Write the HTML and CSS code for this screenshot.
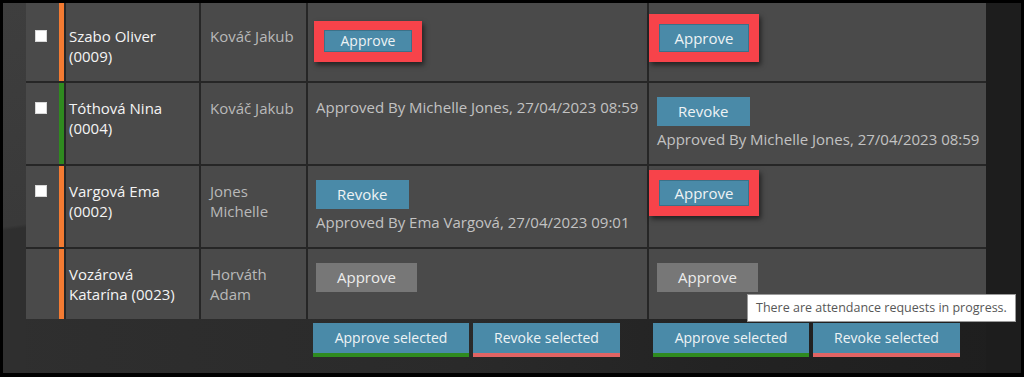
FILE: index.html
```html
<!DOCTYPE html>
<html lang="en">
<head>
  <meta charset="UTF-8">
  <title>Attendance approval</title>
  <link rel="stylesheet" href="styles.css">
</head>
<body>
  <div class="screen">
    <div class="side"></div>

    <div class="main">
      <div class="grid">
        <!-- row cut off by the scroll -->
        <div class="row stub">
          <div class="cell check late"></div>
          <div class="cell"></div>
          <div class="cell"></div>
          <div class="cell"></div>
          <div class="cell"></div>
        </div>

        <div class="row">
          <div class="cell check late"><input type="checkbox"></div>
          <div class="cell name">Szabo Oliver (0009)</div>
          <div class="cell approver">Kováč Jakub</div>
          <div class="cell action">
            <span class="mark mark-a"><span class="btn small">Approve</span></span>
          </div>
          <div class="cell action">
            <span class="mark mark-b"><span class="btn mid">Approve</span></span>
          </div>
        </div>

        <div class="row">
          <div class="cell check ok"><input type="checkbox"></div>
          <div class="cell name">Tóthová Nina (0004)</div>
          <div class="cell approver">Kováč Jakub</div>
          <div class="cell action">
            <div class="note first">Approved By Michelle Jones, 27/04/2023 08:59</div>
          </div>
          <div class="cell action">
            <span class="btn">Revoke</span>
            <div class="note">Approved By Michelle Jones, 27/04/2023 08:59</div>
          </div>
        </div>

        <div class="row">
          <div class="cell check late"><input type="checkbox"></div>
          <div class="cell name">Vargová Ema (0002)</div>
          <div class="cell approver">Jones Michelle</div>
          <div class="cell action">
            <span class="btn">Revoke</span>
            <div class="note">Approved By Ema Vargová, 27/04/2023 09:01</div>
          </div>
          <div class="cell action">
            <span class="mark mark-c"><span class="btn flat">Approve</span></span>
          </div>
        </div>

        <div class="row">
          <div class="cell check late"></div>
          <div class="cell name">Vozárová Katarína (0023)</div>
          <div class="cell approver">Horváth Adam</div>
          <div class="cell action"><span class="btn disabled">Approve</span></div>
          <div class="cell action"><span class="btn disabled">Approve</span></div>
        </div>
      </div>

      <div class="footer">
        <div></div>
        <div></div>
        <div></div>
        <div class="bulk-group">
          <span class="bulk approve">Approve selected</span>
          <span class="bulk revoke">Revoke selected</span>
        </div>
        <div class="bulk-group right">
          <span class="bulk approve">Approve selected</span>
          <span class="bulk revoke">Revoke selected</span>
        </div>
      </div>
    </div>

    <div class="edge"></div>

    <div class="tooltip">There are attendance requests in progress.</div>
  </div>
</body>
</html>
```

FILE: styles.css
```css
:root {
  --cell-bg: #4a4a4a;
  --line: #262626;
  --blue: #4a8aa8;
  --grey-btn: #777777;
  --late: #f47b32;
  --ok: #2f8a1f;
  --mark: #f7434a;
}

* {
  box-sizing: border-box;
}

body {
  margin: 0;
  background: #000;
  font-family: "Open Sans", "Noto Sans", sans-serif;
  font-size: 15px;
}

.screen {
  position: relative;
  display: flex;
  height: 370px;
  margin: 3px 3px 4px 3px;
  overflow: hidden;
  background: linear-gradient(90deg, #2f2f2f 0%, #2a2a2a 45%, #232323 70%, #1e1e1e 100%);
}

.side {
  width: 23px;
  background: linear-gradient(172deg, #3e3e3e 0%, #393939 60%, #2f2f2f 61%);
}

.main {
  width: 960px;
}

.edge {
  flex: 1;
  background: #1d1d1d;
}

/* Table */
.grid {
  display: grid;
  row-gap: 2px;
  background: var(--line);
}

.row {
  display: grid;
  grid-template-columns: 38px 133px 105px 339px 1fr;
  column-gap: 2px;
}

.cell {
  background: var(--cell-bg);
  line-height: 20px;
}

.stub {
  height: 6px;
}

.check {
  padding: 19px 0 0 9px;
  border-right: 5px solid transparent;
}

.check.late {
  border-right-color: var(--late);
}

.check.ok {
  border-right-color: var(--ok);
}

.check input {
  appearance: none;
  display: block;
  width: 12px;
  height: 12px;
  margin: 0;
  background: #fff;
  border: 1px solid #d8d8d8;
}

.name {
  padding: 15px 16px 15px 3px;
  color: #f4f4f4;
}

.approver {
  padding: 15px 8px 15px 9px;
  color: #b9b9b9;
}

.action {
  padding: 14px 4px 15px 8px;
}

.note {
  margin-top: 3px;
  color: #c2c2c2;
  white-space: nowrap;
}

.note.first {
  margin-top: 0;
}

/* Buttons */
.btn {
  display: inline-block;
  height: 29px;
  padding: 0 21px;
  line-height: 29px;
  color: #eef3f5;
  background: var(--blue);
  vertical-align: top;
}

.btn.disabled {
  background: var(--grey-btn);
  color: #ececec;
}

.btn.small {
  width: 88px;
  height: 22px;
  padding: 0;
  line-height: 22px;
  font-size: 14px;
  text-align: center;
  box-shadow: inset 0 0 0 1px #3b7189;
}

.btn.mid {
  width: 90px;
  height: 28px;
  padding: 0;
  line-height: 28px;
  text-align: center;
  box-shadow: inset 0 0 0 1px #3b7189;
}

.btn.flat {
  width: 90px;
  height: 26px;
  padding: 0;
  line-height: 26px;
  text-align: center;
  box-shadow: inset 0 0 0 1px #3b7189;
}

/* red highlight boxes drawn on the screenshot */
.mark {
  display: inline-block;
  border: 10px solid var(--mark);
  box-shadow: 2px 3px 5px rgba(0, 0, 0, 0.55);
  vertical-align: top;
}

.mark-a {
  border-top-width: 9px;
  margin: -4px 0 0 -2px;
}

.mark-b {
  margin: -11px 0 0 -8px;
}

.mark-c {
  margin: -10px 0 0 -8px;
}

/* Footer with bulk actions */
.footer {
  display: grid;
  grid-template-columns: 38px 133px 105px 339px 1fr;
  column-gap: 2px;
  padding-top: 4px;
}

.bulk-group {
  display: flex;
  gap: 4px;
  padding-left: 5px;
}

.bulk-group.right {
  padding-left: 4px;
}

.bulk {
  height: 34px;
  line-height: 30px;
  font-size: 14px;
  text-align: center;
  color: #eef3f5;
  background: var(--blue);
  border-bottom: 4px solid;
}

.bulk.approve {
  width: 156px;
  border-bottom-color: var(--ok);
}

.bulk.revoke {
  width: 147px;
  border-bottom-color: #e06464;
}

/* Tooltip over the last row */
.tooltip {
  position: absolute;
  left: 744px;
  top: 291px;
  height: 28px;
  padding: 0 8px;
  line-height: 26px;
  font-size: 12.5px;
  color: #575757;
  background: #fff;
  border: 1px solid #9a9a9a;
  white-space: nowrap;
}
```
